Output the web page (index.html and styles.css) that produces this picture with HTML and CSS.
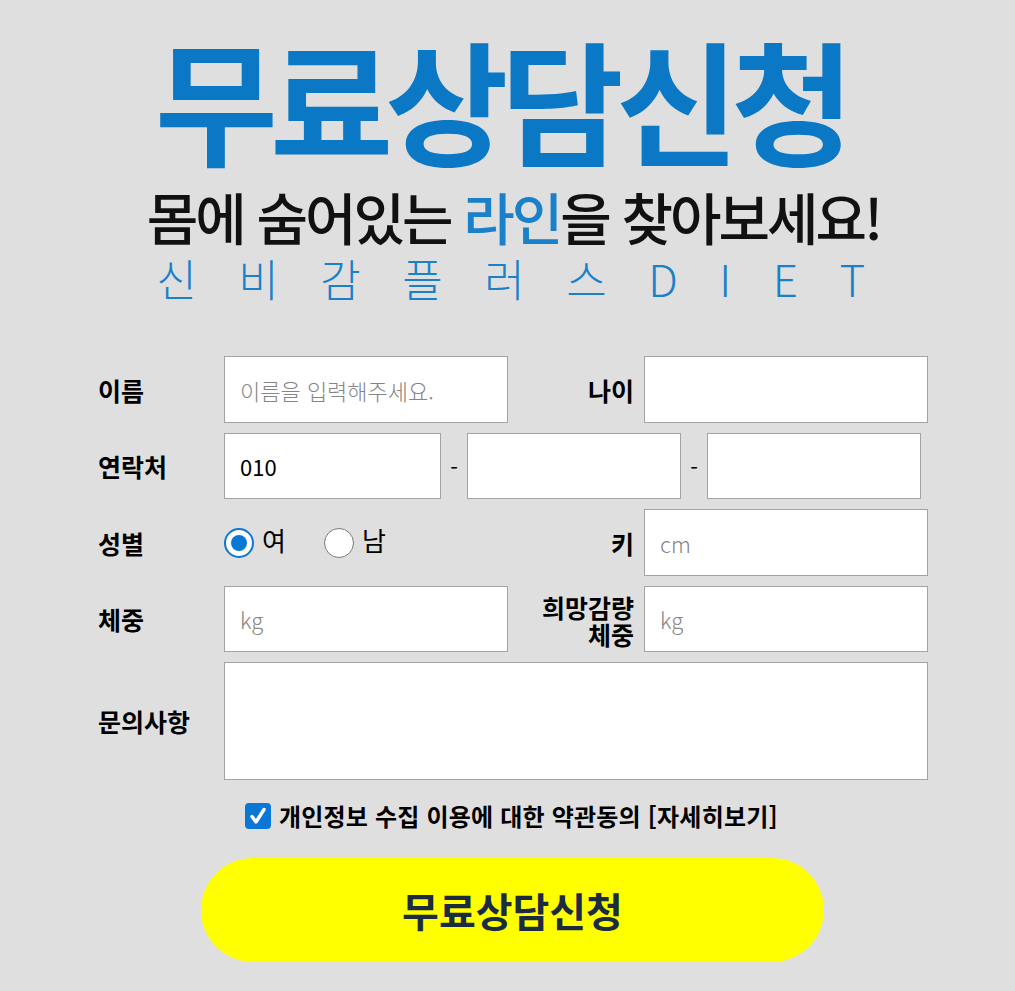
FILE: index.html
```html
<!DOCTYPE html>
<html lang="ko">
<head>
<meta charset="utf-8">
<title>무료상담신청</title>
<link rel="stylesheet" href="styles.css">
</head>
<body>
<div class="page">
  <header class="hero">
    <h1 class="hero-title">무료상담신청</h1>
    <p class="hero-sub">몸에 숨어있는 <span class="accent">라인</span>을 찾아보세요!</p>
    <p class="hero-brand">신비감플러스DIET</p>
  </header>

  <form class="form">
    <label class="label">이름</label>
    <div class="field"><input class="input" type="text" placeholder="이름을 입력해주세요."></div>
    <label class="label label-right">나이</label>
    <div class="field"><input class="input" type="text"></div>

    <label class="label">연락처</label>
    <div class="phone">
      <input class="input" type="text" value="010">
      <span class="dash">-</span>
      <input class="input" type="text">
      <span class="dash">-</span>
      <input class="input" type="text">
    </div>

    <label class="label">성별</label>
    <div class="radios">
      <span class="radio-item"><span class="radio checked"></span><span class="radio-text">여</span></span>
      <span class="radio-item"><span class="radio"></span><span class="radio-text">남</span></span>
    </div>
    <label class="label label-right">키</label>
    <div class="field"><input class="input" type="text" placeholder="cm"></div>

    <label class="label">체중</label>
    <div class="field"><input class="input" type="text" placeholder="kg"></div>
    <label class="label label-right label-two">희망감량<br>체중</label>
    <div class="field"><input class="input" type="text" placeholder="kg"></div>

    <label class="label">문의사항</label>
    <div class="field-wide"><textarea class="textarea"></textarea></div>
  </form>

  <div class="agree">
    <span class="checkbox">
      <svg viewBox="0 0 26 26" width="26" height="26"><rect x="0" y="0" width="26" height="26" rx="4" fill="#0a76d6"/><path d="M7 13.5 L11 19 L19 6.5" fill="none" stroke="#fff" stroke-width="3.4" stroke-linecap="round" stroke-linejoin="round"/></svg>
    </span>
    <span class="agree-text">개인정보 수집 이용에 대한 약관동의 [자세히보기]</span>
  </div>

  <div class="submit-row">
    <button class="submit" type="button">무료상담신청</button>
  </div>
</div>
</body>
</html>
```

FILE: styles.css
```css
* { box-sizing: border-box; }
html, body { margin: 0; padding: 0; }
body {
  background: #dfdfdf;
  font-family: "Noto Sans CJK KR", "Noto Sans", sans-serif;
  color: #000;
}
.page {
  width: 1015px;
  padding-top: 20px;
}
.hero {
  text-align: center;
}
.hero-title {
  margin: 0 0 0 -14px;
  font-size: 134px;
  font-weight: 700;
  line-height: 156px;
  letter-spacing: -8px;
  color: #0b78c6;
}
.hero-sub {
  margin: 8px 0 0 12px;
  font-size: 56px;
  font-weight: 500;
  line-height: 64px;
  letter-spacing: -3px;
  color: #111;
}
.hero-sub .accent { color: #1a80c9; }
.hero-brand {
  margin: 2px 0 0 48px;
  font-size: 44px;
  font-weight: 300;
  line-height: 56px;
  letter-spacing: 41.5px;
  color: #1a80c9;
}
.form {
  margin: 50px 0 0 98px;
  width: 830px;
  display: grid;
  grid-template-columns: 126px 284px 136px 284px;
  grid-template-rows: 67px 66px 67px 66px 118px;
  row-gap: 10px;
}
.label {
  display: flex;
  align-items: center;
  font-size: 25px;
  font-weight: 700;
}
.label-right {
  justify-content: flex-end;
  padding-right: 10px;
  text-align: right;
}
.label-two {
  line-height: 27px;
  padding-top: 3px;
}
.field { display: flex; }
.input {
  width: 100%;
  height: 100%;
  border: 1px solid #a3a3a3;
  background: #fff;
  padding: 0 15px;
  font-family: "Noto Sans CJK KR", "Noto Sans", sans-serif;
  font-size: 22px;
  color: #000;
  outline: none;
}
.input::placeholder { color: #858585; font-weight: 300; }
.phone {
  grid-column: 2 / 5;
  display: flex;
  align-items: center;
}
.phone .input { width: 217px; }
.phone .input + .dash + .input { width: 214px; }
.dash {
  width: 26px;
  text-align: center;
  font-size: 22px;
}
.radios {
  display: flex;
  align-items: center;
  gap: 38px;
}
.radio-item {
  display: flex;
  align-items: center;
  gap: 8px;
}
.radio {
  width: 30px;
  height: 30px;
  border-radius: 50%;
  border: 1.5px solid #7a7a7a;
  background: #fff;
  position: relative;
}
.radio.checked {
  border: 2px solid #0a76d6;
}
.radio.checked::after {
  content: "";
  position: absolute;
  left: 5px;
  top: 5px;
  width: 16px;
  height: 16px;
  border-radius: 50%;
  background: #0a76d6;
}
.radio-text {
  font-size: 26px;
  margin-top: -6px;
}
.field-wide {
  grid-column: 2 / 5;
}
.textarea {
  display: block;
  width: 100%;
  height: 118px;
  border: 1px solid #a3a3a3;
  background: #fff;
  resize: none;
  outline: none;
}
.agree {
  margin: 18px 0 0 245px;
  display: flex;
  align-items: center;
  gap: 8px;
}
.checkbox { display: flex; }
.agree-text {
  font-size: 24px;
  font-weight: 700;
  letter-spacing: 0.2px;
}
.submit-row {
  display: flex;
  justify-content: center;
  margin-top: 25px;
  padding-left: 10px;
}
.submit {
  width: 623px;
  height: 104px;
  border: none;
  border-radius: 52px;
  background: #ffff00;
  font-family: "Noto Sans CJK KR", "Noto Sans", sans-serif;
  font-size: 40px;
  font-weight: 700;
  color: #1b2b40;
}
```
